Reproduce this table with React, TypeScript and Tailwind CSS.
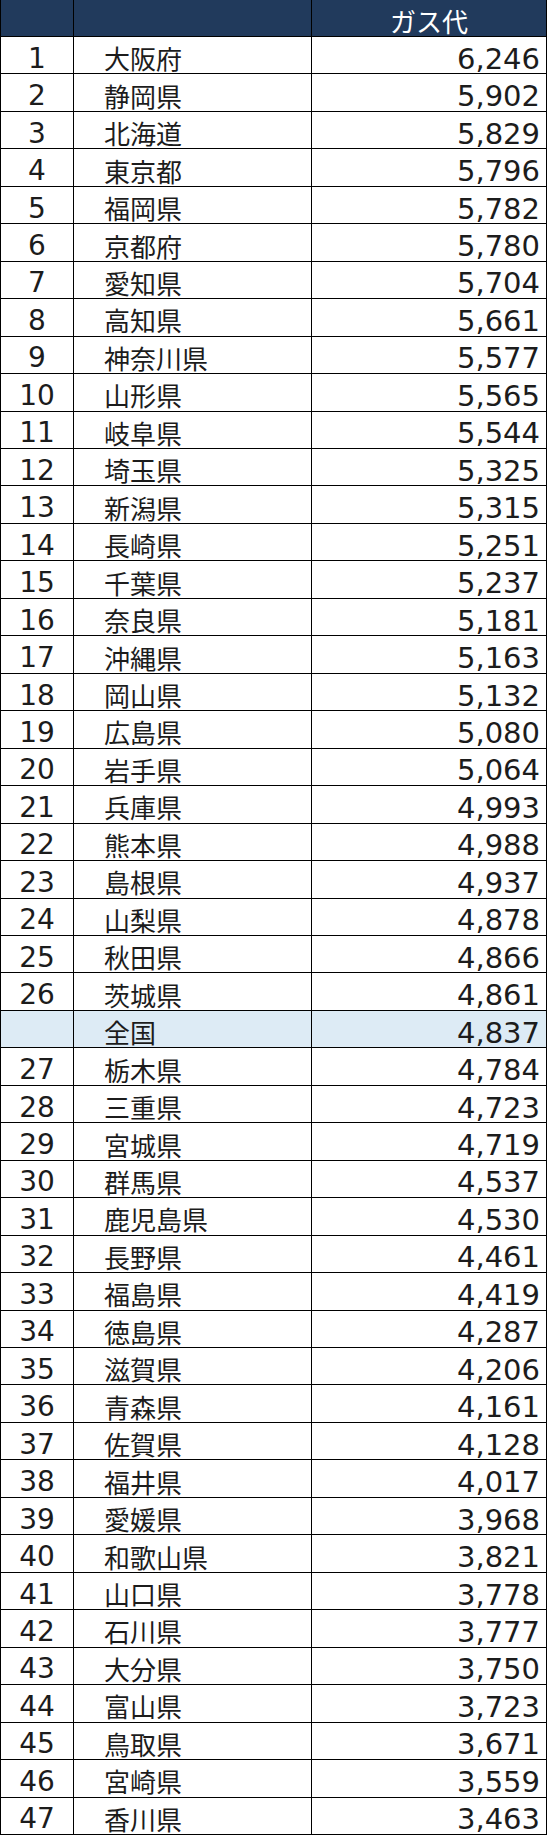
import React from "react";

const rows: [string, string, string][] = [
  ["1", "大阪府", "6,246"],
  ["2", "静岡県", "5,902"],
  ["3", "北海道", "5,829"],
  ["4", "東京都", "5,796"],
  ["5", "福岡県", "5,782"],
  ["6", "京都府", "5,780"],
  ["7", "愛知県", "5,704"],
  ["8", "高知県", "5,661"],
  ["9", "神奈川県", "5,577"],
  ["10", "山形県", "5,565"],
  ["11", "岐阜県", "5,544"],
  ["12", "埼玉県", "5,325"],
  ["13", "新潟県", "5,315"],
  ["14", "長崎県", "5,251"],
  ["15", "千葉県", "5,237"],
  ["16", "奈良県", "5,181"],
  ["17", "沖縄県", "5,163"],
  ["18", "岡山県", "5,132"],
  ["19", "広島県", "5,080"],
  ["20", "岩手県", "5,064"],
  ["21", "兵庫県", "4,993"],
  ["22", "熊本県", "4,988"],
  ["23", "島根県", "4,937"],
  ["24", "山梨県", "4,878"],
  ["25", "秋田県", "4,866"],
  ["26", "茨城県", "4,861"],
  ["", "全国", "4,837"],
  ["27", "栃木県", "4,784"],
  ["28", "三重県", "4,723"],
  ["29", "宮城県", "4,719"],
  ["30", "群馬県", "4,537"],
  ["31", "鹿児島県", "4,530"],
  ["32", "長野県", "4,461"],
  ["33", "福島県", "4,419"],
  ["34", "徳島県", "4,287"],
  ["35", "滋賀県", "4,206"],
  ["36", "青森県", "4,161"],
  ["37", "佐賀県", "4,128"],
  ["38", "福井県", "4,017"],
  ["39", "愛媛県", "3,968"],
  ["40", "和歌山県", "3,821"],
  ["41", "山口県", "3,778"],
  ["42", "石川県", "3,777"],
  ["43", "大分県", "3,750"],
  ["44", "富山県", "3,723"],
  ["45", "鳥取県", "3,671"],
  ["46", "宮崎県", "3,559"],
  ["47", "香川県", "3,463"],
];

export default function App() {
  return (
    <div className="w-[550px] h-[1835px] bg-white overflow-hidden">
      <div
        className="grid w-[547px] h-[1835px] grid-cols-[73px_238px_235px] grid-rows-[37px_repeat(48,minmax(0,1fr))] border-l border-black leading-none text-[#1c1c1c]"
        style={{ fontFamily: '"DejaVu Sans", "Noto Sans CJK JP", sans-serif' }}
      >
        <div className="bg-[#213a5c] border-r border-b border-black" />
        <div className="bg-[#213a5c] border-r border-b border-black" />
        <div className="bg-[#213a5c] border-r border-b border-black flex items-end justify-center pb-[2px] text-white text-[26px]">
          <span style={{ fontFamily: '"Noto Sans CJK JP", sans-serif' }}>ガス代</span>
        </div>
        {rows.map(([rank, name, val], i) => {
          const bg = rank === "" ? "bg-[#ddebf5]" : "bg-white";
          return (
            <React.Fragment key={i}>
              <div className={`${bg} border-r border-b border-black flex items-center justify-center pt-[7px] text-[28px]`}>
                {rank}
              </div>
              <div className={`${bg} border-r border-b border-black flex items-center pl-[30px] pt-[6px] text-[26px]`}>
                <span style={{ fontFamily: '"Noto Sans CJK JP", sans-serif' }}>{name}</span>
              </div>
              <div className={`${bg} border-r border-b border-black flex items-center justify-end pr-[6px] pt-[8px] text-[29px]`}>
                {val}
              </div>
            </React.Fragment>
          );
        })}
      </div>
    </div>
  );
}
